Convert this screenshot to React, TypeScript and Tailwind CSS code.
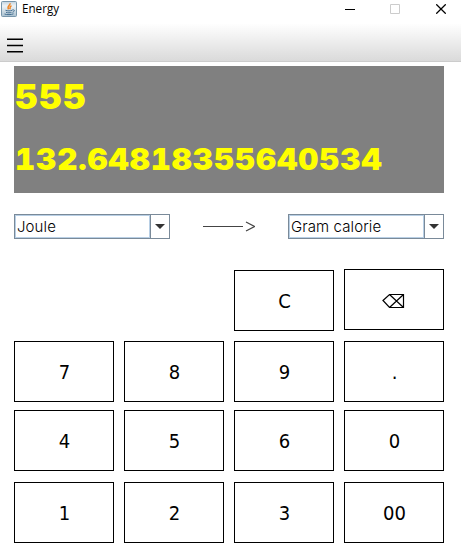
import React from "react";

function JavaIcon() {
  return (
    <svg className="h-4 w-4" viewBox="0 0 16 16" fill="none">
      <defs>
        <linearGradient id="tile" x1="0" y1="0" x2="0" y2="1">
          <stop offset="0" stopColor="#c3d3de" />
          <stop offset=".3" stopColor="#eef3f6" />
          <stop offset="1" stopColor="#a9c0cf" />
        </linearGradient>
      </defs>
      <rect x=".5" y=".5" width="15" height="15" rx="1" fill="url(#tile)" stroke="#7896ab" />
      <path d="M9 2.3c.8 2-3.500 2.300-1.500 6M10.500 4.800c-2.500 1.200-1 2-1.600 3.400" stroke="#ee8526" strokeWidth="1.500" />
      <path d="M4.500 9.300c2 .8 5 .7 6.500 0M5 11.300c2 .8 4 .6 5.500 0M3.500 13c2.500 1 6.500.8 9-.2M11.200 9c3-.8 2.600 1.600.3 2.300" stroke="#456f91" strokeWidth="1" />
    </svg>
  );
}

function TitleBar() {
  return (
    <header className="flex h-[19px] items-start justify-between bg-white">
      <div className="flex h-[18px] items-center gap-[5px] pl-px">
        <JavaIcon />
        <h1 className="origin-left scale-x-[0.97] font-['Open_Sans','Noto_Sans',sans-serif] text-[12px] leading-[18px]">Energy</h1>
      </div>
      <div className="flex items-center gap-[35px] pr-[15px] pt-1">
        <svg width="10" height="10"><path d="M0 5.500h10" stroke="black" /></svg>
        <svg width="10" height="10" className="mr-px"><path d="M.5.5h9v9h-9z" fill="none" stroke="#ccc" /></svg>
        <svg width="10" height="10"><path d="M.3.300l9.400 9.400M9.700.300l-9.400 9.400" stroke="black" strokeWidth="1.250" /></svg>
      </div>
    </header>
  );
}

function UnitSelect({ value }: { value: string }) {
  return (
    <div className="flex h-[25px] w-[156px] border border-[#7a8a99] bg-white">
      <div className="flex w-[135px] items-center border border-[#b8cfe5] pl-px font-[Inter,sans-serif] text-[15px] font-light leading-[21px] text-black">
        <span className="whitespace-nowrap tracking-[0.1px]">{value}</span>
      </div>
      <div className="flex flex-1 items-center justify-center border-l border-[#7a8a99]">
        <svg width="10" height="5"><path d="M0 0h10L5 5z" fill="#333" /></svg>
      </div>
    </div>
  );
}

function Key({ children, className = "" }: { children: React.ReactNode; className?: string }) {
  return (
    <button
      className={`flex h-[61px] w-[100px] shrink-0 items-center justify-center border border-black bg-white pl-px font-['DejaVu_Sans_Condensed','DejaVu_Sans',sans-serif] text-[20px] font-stretch-condensed leading-none text-black ${className}`}
    >
      {children}
    </button>
  );
}

export default function App() {
  return (
    <main className="flex h-[558px] w-[461px] flex-col overflow-hidden bg-white text-black">
      <TitleBar />
      <nav className="flex h-[43px] items-center border-b border-[#ccc] bg-linear-to-b from-white from-10% to-[#dadada] pl-[7px] pt-[10px]">
        <svg width="16" height="15"><path d="M0 1.200h16M0 7.500h16M0 13.800h16" stroke="black" strokeWidth="1.500" /></svg>
      </nav>
      <div className="flex w-[458px] flex-col px-[14px] pt-1">
        <section className="h-[127px] w-[430px] bg-[#808080] pl-px pt-3 font-[Inter,sans-serif] font-black tabular-nums text-[#ff0]">
          <div className="h-[38px] w-max origin-left scale-x-[1.04] whitespace-nowrap text-[34px] leading-[38px] tracking-[1.200px]">555</div>
          <div className="mt-[25px] h-9 w-max origin-left scale-x-[1.04] whitespace-nowrap text-[30px] leading-9 tracking-[0.920px]">132.64818355640534</div>
        </section>
        <section className="mt-[21px] flex h-[25px] w-[430px] justify-between">
          <UnitSelect value="Joule" />
          <svg width="52" height="25"><path d="M0 12.500h40M43 8l8.500 4.500L43 17" fill="none" stroke="#444" strokeWidth="1.200" /></svg>
          <UnitSelect value="Gram calorie" />
        </section>
        <section className="mt-[30px] flex w-[430px] flex-col">
          <div className="flex justify-end gap-[10px]">
            <Key className="mt-px">C</Key>
            <Key className="mb-px">
              <svg width="24" height="16" fill="none" stroke="black" strokeWidth="1.200" className="-translate-x-px translate-y-px"><path d="M1 7.500 7.500 1.500h14v13h-14zM7.500 1.500l14 13M21.500 1.500l-14 13" /></svg>
            </Key>
          </div>
          <div className="mt-[10px] flex gap-[10px]"><Key>7</Key><Key>8</Key><Key>9</Key><Key>.</Key></div>
          <div className="mt-2 flex gap-[10px]"><Key>4</Key><Key>5</Key><Key>6</Key><Key>0</Key></div>
          <div className="mt-[11px] flex gap-[10px]"><Key>1</Key><Key>2</Key><Key>3</Key><Key>00</Key></div>
        </section>
      </div>
    </main>
  );
}
